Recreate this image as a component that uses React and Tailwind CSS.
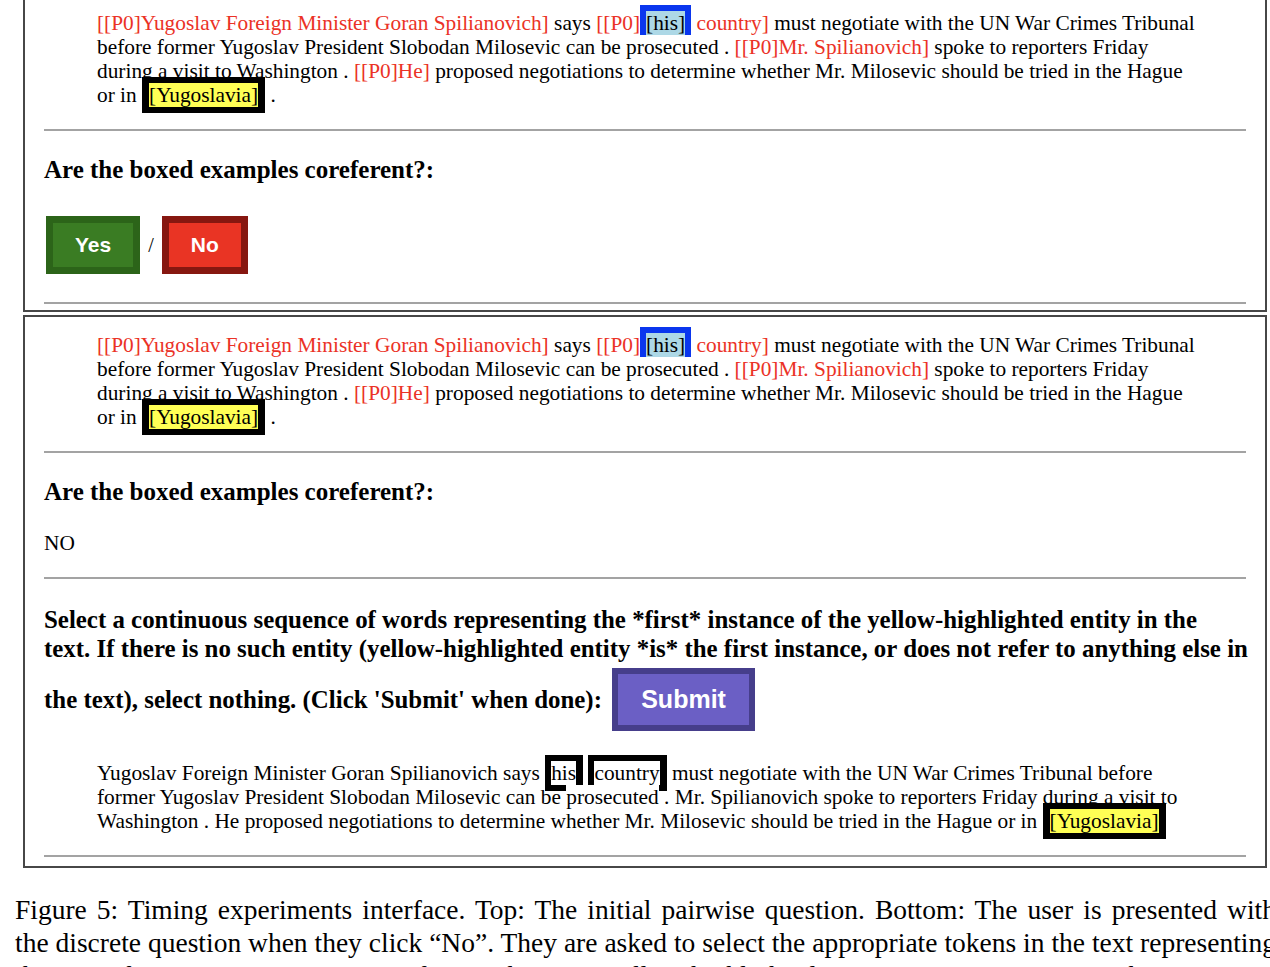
const Red = ({ children }) => <span className="text-[#eb3226]">{children}</span>;

const W = ({ children }) => <span className="bg-white">{children}</span>;

const YellowBox = ({ children }) => (
  <span className="border-[6px] border-x-[7px] border-black bg-[#ffff55] text-black">{children}</span>
);

const Rule = () => <div className="mx-[19px] border-t-2 border-[#a3a3a3]" />;

const Heading = ({ className = "" }) => (
  <h3 className={`ml-[19px] text-[25px] leading-[29px] font-bold ${className}`}>
    Are the boxed examples coreferent?:
  </h3>
);

const MarkedPassage = ({ className = "" }) => (
  <p className={`pl-[72px] text-[21.35px] leading-[24px] whitespace-nowrap ${className}`}>
    <Red>[[P0]Yugoslav Foreign Minister Goran Spilianovich]</Red>
    <W> says </W>
    <Red>[[P0]</Red>
    <span className="border-[6px] border-[#0a36ee] bg-[#add8e6] text-black">[his]</span>{" "}
    <Red>country]</Red>
    <W> must negotiate with the UN War Crimes Tribunal</W>
    <br />
    <W>before former Yugoslav President Slobodan Milosevic can be prosecuted . </W>
    <Red>[[P0]Mr. Spilianovich]</Red>
    <W> spoke to reporters Friday</W>
    <br />
    <W>during a visit to Washington . </W>
    <Red>[[P0]He]</Red>
    <W> proposed negotiations to determine whether Mr. Milosevic should be tried in the Hague</W>
    <br />
    <W>or in </W>
    <YellowBox>[Yugoslavia]</YellowBox>
    <W> .</W>
  </p>
);

export default function App() {
  return (
    <div className="w-[1270px] h-[967px] overflow-hidden bg-white text-black font-['Liberation_Serif',serif]">
      <div className="ml-[23px] w-[1244px]">
        {/* top panel: initial pairwise question */}
        <div className="border-2 border-t-0 border-[#474747] pt-[11px] pb-[6px]">
          <MarkedPassage />
          <div className="mt-[22px]">
            <Rule />
          </div>
          <Heading className="mt-[24px]" />
          <div className="ml-[21px] mt-[32px] flex items-center gap-[8px] font-['Liberation_Sans',sans-serif] text-[21px] leading-[26px] font-bold text-white">
            <button className="border-[7px] border-[#2c6419] bg-[#3a7c23] px-[22px] py-[9px]">Yes</button>
            <span className="font-['Liberation_Serif',serif] font-normal text-black text-[20px]">/</span>
            <button className="border-[7px] border-[#861710] bg-[#e93424] px-[22px] py-[9px]">No</button>
          </div>
          <div className="mt-[28px]">
            <Rule />
          </div>
        </div>

        {/* bottom panel: discrete question */}
        <div className="mt-[3px] border-2 border-[#474747] pt-[16px] pb-[9px]">
          <MarkedPassage />
          <div className="mt-[22px]">
            <Rule />
          </div>
          <Heading className="mt-[24px]" />
          <p className="ml-[19px] mt-[25px] text-[21.35px] leading-[24px]">NO</p>
          <div className="mt-[22px]">
            <Rule />
          </div>
          <p className="ml-[19px] mt-[26px] text-[24.9px] leading-[29px] font-bold whitespace-nowrap">
            Select a continuous sequence of words representing the *first* instance of the yellow-highlighted entity in the
            <br />
            text. If there is no such entity (yellow-highlighted entity *is* the first instance, or does not refer to anything else in
            <br />
            the text), select nothing. (Click 'Submit' when done):{" "}
            <button className="ml-[4px] mt-[5px] mb-[4px] inline-block align-baseline border-[6px] border-[#463e8b] bg-[#6b5fc5] px-[23px] py-[12px] font-['Liberation_Sans',sans-serif] text-[25px] leading-[27px] font-bold text-white">
              Submit
            </button>
          </p>
          <p className="mt-[26px] pl-[72px] text-[21.35px] leading-[24px] whitespace-nowrap">
            Yugoslav Foreign Minister Goran Spilianovich says{" "}
            <span className="border-[6px] border-r-[7px] border-black">his</span>{" "}
            <span className="border-[6px] border-r-[7px] border-black">country</span> must negotiate with the UN War
            Crimes Tribunal before
            <br />
            former Yugoslav President Slobodan Milosevic can be <span className="bg-white">prosecuted</span> . Mr.
            Spilianovich spoke to reporters Friday during a visit to
            <br />
            Washington . He proposed negotiations to determine whether Mr. Milosevic should be tried in the Hague or in{" "}
            <YellowBox>[Yugoslavia]</YellowBox>
          </p>
          <div className="mt-[22px]">
            <Rule />
          </div>
        </div>
      </div>

      {/* figure caption */}
      <div className="ml-[15px] mt-[25px] w-[1261px] text-[27.5px] leading-[33px] text-justify [text-align-last:justify] whitespace-nowrap">
        <div>Figure 5: Timing experiments interface. Top: The initial pairwise question. Bottom: The user is presented with</div>
        <div>the discrete question when they click “No”. They are asked to select the appropriate tokens in the text representing</div>
        <div>the first instance of the yellow-highlighted entity in the text.</div>
      </div>
    </div>
  );
}
